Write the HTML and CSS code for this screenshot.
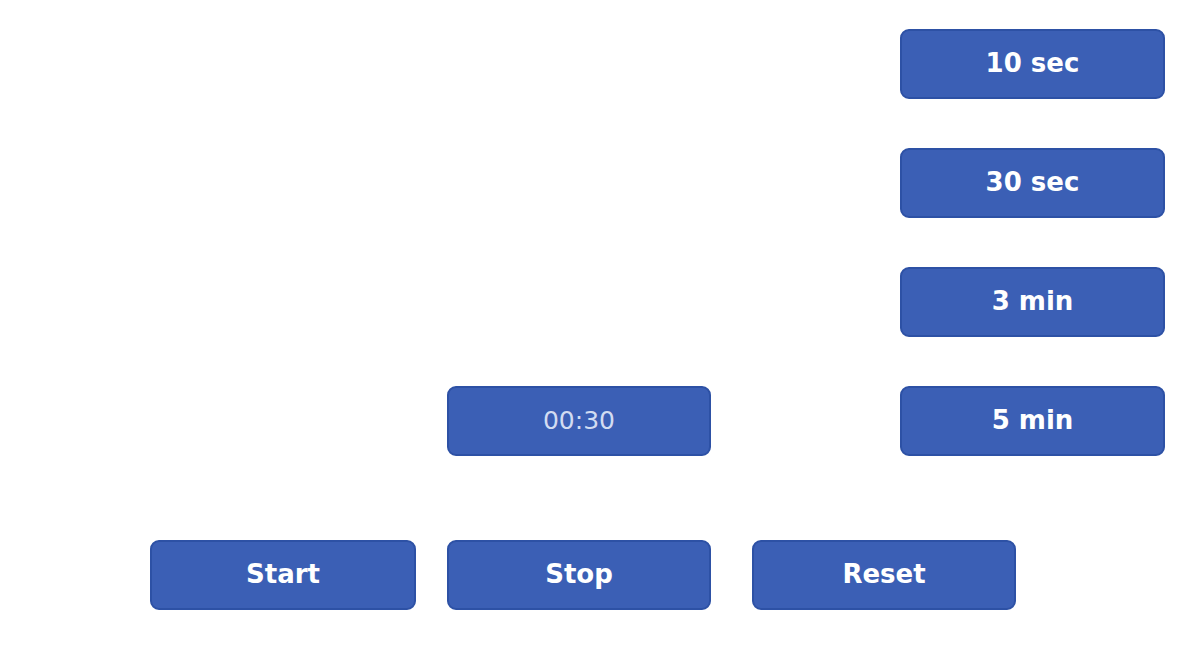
FILE: index.html
```html
<!DOCTYPE html>
<html>
<head>
<meta charset="utf-8">
<link rel="stylesheet" href="styles.css">
</head>
<body>
<div class="app">
  <div class="presets">
    <button class="btn p1">10 sec</button>
    <button class="btn p2">30 sec</button>
    <button class="btn p3">3 min</button>
    <div class="btn display">00:30</div>
    <button class="btn p4">5 min</button>
  </div>
  <div class="controls">
    <button class="btn start">Start</button>
    <button class="btn stop">Stop</button>
    <button class="btn reset">Reset</button>
  </div>
</div>
</body>
</html>
```
FILE: styles.css
```css
html, body {
  margin: 0;
  padding: 0;
  background: #ffffff;
}
.app {
  width: 1200px;
  height: 657px;
  box-sizing: border-box;
  padding-top: 29px;
}
.presets {
  display: grid;
  grid-template-columns: 447px 264px 189px 265px;
  grid-template-rows: repeat(4, 70px);
  row-gap: 49px;
}
.btn {
  box-sizing: border-box;
  height: 70px;
  margin: 0;
  padding: 0 0 2px 0;
  background: #3b5fb5;
  border: 2px solid #2d51a5;
  border-radius: 9px;
  color: #ffffff;
  font-family: "DejaVu Sans", "Liberation Sans", sans-serif;
  font-weight: 700;
  font-size: 26px;
  display: flex;
  align-items: center;
  justify-content: center;
}
.p1 { grid-column: 4; grid-row: 1; }
.p2 { grid-column: 4; grid-row: 2; }
.p3 { grid-column: 4; grid-row: 3; }
.p4 { grid-column: 4; grid-row: 4; }
.display {
  grid-column: 2;
  grid-row: 4;
  font-weight: 400;
  color: #d2dcf2;
  font-size: 25px;
}
.controls {
  display: flex;
  margin-top: 84px;
  padding-left: 150px;
}
.start { width: 266px; }
.stop { width: 264px; margin-left: 31px; }
.reset { width: 264px; margin-left: 41px; }
```
